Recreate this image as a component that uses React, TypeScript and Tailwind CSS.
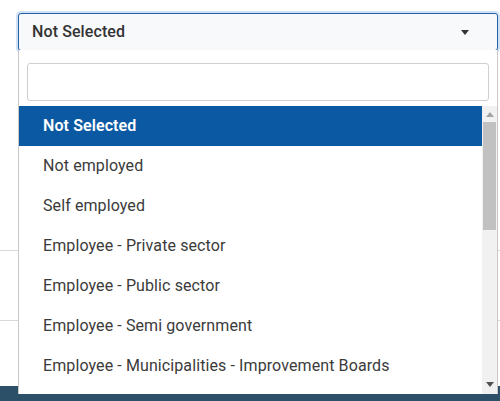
const OPTIONS = [
  "Not Selected",
  "Not employed",
  "Self employed",
  "Employee - Private sector",
  "Employee - Public sector",
  "Employee - Semi government",
  "Employee - Municipalities - Improvement Boards",
];

function Caret({ className }: { className?: string }) {
  return (
    <svg width="8" height="5" viewBox="0 0 8 5" className={className}>
      <path d="M0 0h8L4 5z" fill="currentColor" />
    </svg>
  );
}

export default function App() {
  return (
    <div
      className="relative h-[401px] w-[500px] overflow-hidden bg-white"
      style={{ fontFamily: "Roboto, 'Liberation Sans', sans-serif" }}
    >
      {/* page behind the open menu */}
      <div className="h-[251px] border-b border-[#d9d9d9]" />
      <div className="h-[70px] border-b border-[#d9d9d9]" />
      <div className="h-[65px]" />
      <div className="h-[20px] bg-[#2c5068]" />

      {/* select trigger */}
      <div className="absolute left-[18px] top-[13px] flex h-[38px] w-[480px] items-center justify-between rounded-[3px] border border-[#2461a5] bg-[#f8f9fb] pl-[13px] pr-[28px] shadow-[0_0_0_2px_rgba(120,170,225,0.35)]">
        <span className="text-[16px] font-medium tracking-[0.1px] text-[#333]">Not Selected</span>
        <Caret className="text-[#333]" />
      </div>

      {/* dropdown */}
      <div className="absolute left-[18px] top-[50px] flex h-[344px] w-[480px] flex-col border-x border-[#c9c9c9] bg-white">
        <div className="px-[8px] pb-[5px] pt-[13px]">
          <div className="h-[38px] rounded-[3px] border border-[#cfcfcf] bg-white" />
        </div>
        <div className="flex min-h-0 flex-1">
          <ul className="flex-1 overflow-hidden tracking-[0.1px]">
            {OPTIONS.map((option, i) => (
              <li
                key={option}
                className={
                  i === 0
                    ? "flex h-[40px] items-center bg-[#0c59a3] pl-[24px] text-[16px] font-semibold text-white"
                    : "flex h-[40px] items-center pl-[24px] text-[16px] text-[#3b3b3b]"
                }
              >
                {option}
              </li>
            ))}
          </ul>
          <div className="flex w-[15px] flex-col items-center bg-[#f1f1f1]">
            <div className="flex h-[16px] items-center">
              <Caret className="rotate-180 text-[#a3a3a3]" />
            </div>
            <div className="h-[108px] w-[13px] bg-[#c1c1c1]" />
            <div className="flex-1" />
            <div className="flex h-[16px] items-center pb-[4px]">
              <Caret className="text-[#505050]" />
            </div>
          </div>
        </div>
      </div>
    </div>
  );
}
